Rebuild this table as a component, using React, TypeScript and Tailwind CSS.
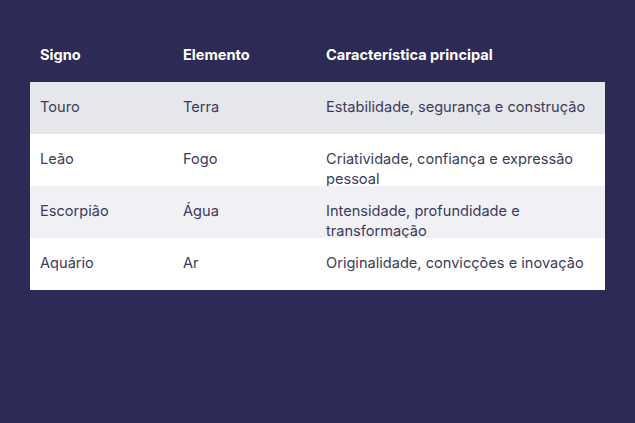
import React from 'react';

const ROWS = [
  { signo: 'Touro', elemento: 'Terra', desc: 'Estabilidade, segurança e construção', bg: 'bg-[#e5e7eb]' },
  { signo: 'Leão', elemento: 'Fogo', desc: 'Criatividade, confiança e expressão pessoal', bg: 'bg-white' },
  { signo: 'Escorpião', elemento: 'Água', desc: 'Intensidade, profundidade e transformação', bg: 'bg-[#f0f0f5]' },
  { signo: 'Aquário', elemento: 'Ar', desc: 'Originalidade, convicções e inovação', bg: 'bg-white' },
];

export default function App() {
  return (
    <div
      className="min-h-screen w-full bg-[#2d2b55] px-[30px] pt-[30px]"
      style={{ fontFamily: 'Inter, "Noto Sans", sans-serif' }}
    >
      <div className="w-[575px]">
        {/* Header */}
        <div className="grid h-[52px] grid-cols-[143px_143px_1fr] items-center text-[14.6px] font-bold text-white">
          <div className="px-[10px]">Signo</div>
          <div className="px-[10px]">Elemento</div>
          <div className="px-[10px]">Característica principal</div>
        </div>

        {ROWS.map((r) => (
          <div
            key={r.signo}
            className={`grid h-[52px] grid-cols-[143px_143px_1fr] overflow-hidden pt-[15px] text-[14.6px] leading-5 text-[#3c3b5a] ${r.bg}`}
          >
            <div className="px-[10px]">{r.signo}</div>
            <div className="px-[10px]">{r.elemento}</div>
            <div className="px-[10px]">{r.desc}</div>
          </div>
        ))}
      </div>
    </div>
  );
}
